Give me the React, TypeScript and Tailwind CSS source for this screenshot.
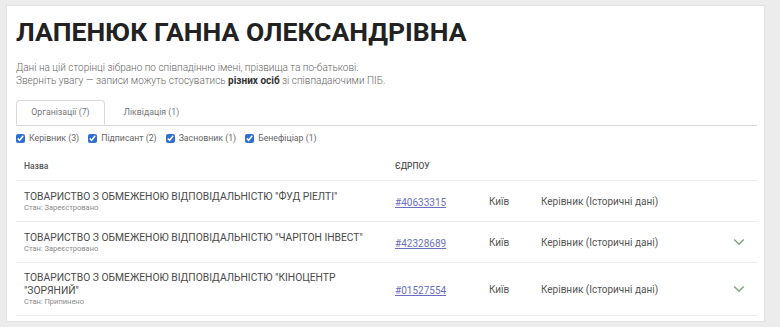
import React from 'react';

type Row = {
  name: string;
  status: string;
  code: string;
  city: string;
  role: string;
  expand: boolean;
};

const rows: Row[] = [
  {
    name: 'ТОВАРИСТВО З ОБМЕЖЕНОЮ ВІДПОВІДАЛЬНІСТЮ "ФУД РІЕЛТІ"',
    status: 'Стан: Зареєстровано',
    code: '#40633315',
    city: 'Київ',
    role: 'Керівник (Історичні дані)',
    expand: false,
  },
  {
    name: 'ТОВАРИСТВО З ОБМЕЖЕНОЮ ВІДПОВІДАЛЬНІСТЮ "ЧАРІТОН ІНВЕСТ"',
    status: 'Стан: Зареєстровано',
    code: '#42328689',
    city: 'Київ',
    role: 'Керівник (Історичні дані)',
    expand: true,
  },
  {
    name: 'ТОВАРИСТВО З ОБМЕЖЕНОЮ ВІДПОВІДАЛЬНІСТЮ "КІНОЦЕНТР "ЗОРЯНИЙ"',
    status: 'Стан: Припинено',
    code: '#01527554',
    city: 'Київ',
    role: 'Керівник (Історичні дані)',
    expand: true,
  },
];

const filters = ['Керівник (3)', 'Підписант (2)', 'Засновник (1)', 'Бенефіціар (1)'];

const Chevron = () => (
  <svg width="12" height="8" viewBox="0 0 12 8" fill="none">
    <path d="M1.2 1.5L6 6.2L10.8 1.5" stroke="#80ab80" strokeWidth="1.6" />
  </svg>
);

export default function App() {
  return (
    <div
      className="min-h-[327px] bg-[#ececec] pt-[5px] pl-[6px] pr-[15px]"
      style={{ fontFamily: 'Roboto, "Liberation Sans", sans-serif' }}
    >
      <div className="bg-white border border-[#e2e2e2] pl-[9px] pr-[7px] pt-[12px] pb-[5px]">
        <h1 className="text-[26.5px] leading-[28px] font-bold text-[#222]">
          ЛАПЕНЮК ГАННА ОЛЕКСАНДРІВНА
        </h1>

        <div className="mt-[15px] text-[10px] leading-[13px] font-light text-[#666]">
          <p>Дані на цій сторінці зібрано по співпадінню імені, прізвища та по-батькові.</p>
          <p>
            Зверніть увагу — записи можуть стосуватись{' '}
            <b className="font-bold text-[#333]">різних осіб</b> зі співпадаючими ПІБ.
          </p>
        </div>

        <div className="mt-[13px] flex border-b border-[#d9d9d9] text-[8.75px] text-[#777]">
          <div className="w-[89px] h-[25px] -mb-px flex items-center justify-center border border-[#d9d9d9] border-b-white rounded-t-[4px] bg-white">
            Організації (7)
          </div>
          <div className="w-[93px] h-[25px] flex items-center justify-center">Ліквідація (1)</div>
        </div>

        <div className="mt-[6px] flex items-center gap-[9px] text-[8.75px] text-[#666]">
          {filters.map((f) => (
            <label key={f} className="flex items-center gap-[4px]">
              <input
                type="checkbox"
                defaultChecked
                className="w-[9px] h-[9px] m-0 accent-[#2f6fd0]"
              />
              <span>{f}</span>
            </label>
          ))}
        </div>

        <div className="mt-[8px]">
          <div className="grid grid-cols-[371px_94px_52px_1fr_36px] h-[28px] items-center border-b border-[#ececec] text-[8.5px] font-medium text-[#555]">
            <div className="px-2">Назва</div>
            <div className="px-2">ЄДРПОУ</div>
            <div />
            <div />
            <div />
          </div>

          {rows.map((r) => (
            <div
              key={r.code}
              className="grid grid-cols-[371px_94px_52px_1fr_36px] items-center border-b border-[#ececec] py-[8px]"
            >
              <div className="px-2">
                <div className="text-[10.3px] leading-[13px] text-[#4a4a4a]">{r.name}</div>
                <div className="text-[7.5px] leading-[10px] text-[#8a8a8a]">{r.status}</div>
              </div>
              <div className="px-2">
                <a href="#" className="text-[10px] text-[#6a6fc0] underline">
                  {r.code}
                </a>
              </div>
              <div className="px-2 text-[10px] text-[#555]">{r.city}</div>
              <div className="px-2 text-[10px] text-[#555]">{r.role}</div>
              <div className="flex justify-center">{r.expand && <Chevron />}</div>
            </div>
          ))}
        </div>
      </div>
    </div>
  );
}
